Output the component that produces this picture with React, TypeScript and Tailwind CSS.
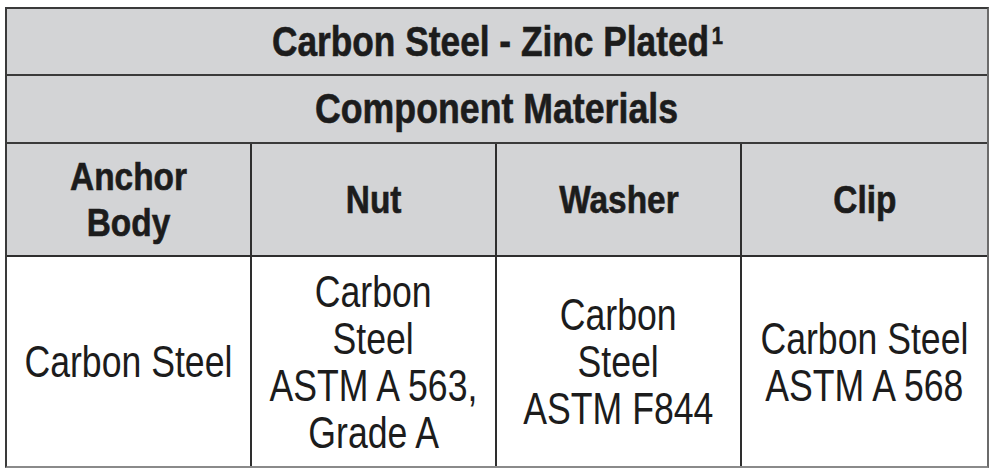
import React from 'react';

const headers = [['Anchor', 'Body'], ['Nut'], ['Washer'], ['Clip']];

const cells = [
  ['Carbon Steel'],
  ['Carbon', 'Steel', 'ASTM A 563,', 'Grade A'],
  ['Carbon', 'Steel', 'ASTM F844'],
  ['Carbon Steel', 'ASTM A 568'],
];

export default function App() {
  const font = { fontFamily: "'Liberation Sans', Arial, sans-serif" };

  return (
    <div className="min-h-[472px] w-[1000px] bg-white pt-[7px] pl-[5px]" style={font}>
      <div className="w-[984px] border-2 border-[#3a3a3a] border-r-[#6b6b6b] border-b-[#8a8a8a] text-[#1c1c1c]">
        {/* Title rows */}
        <div className="flex h-[67px] items-center justify-center border-b-2 border-[#3a3a3a] bg-[#d3d4d6]">
          <span className="inline-block scale-x-[0.84] whitespace-nowrap text-[42px] font-bold leading-none [-webkit-text-stroke:0.6px_#1c1c1c]">
            Carbon Steel - Zinc Plated
            <span className="relative -top-[12px] ml-[3px] text-[24px]">1</span>
          </span>
        </div>
        <div className="flex h-[68px] items-center justify-center border-b-2 border-[#3a3a3a] bg-[#d3d4d6]">
          <span className="inline-block scale-x-[0.85] whitespace-nowrap text-[42px] font-bold leading-none [-webkit-text-stroke:0.6px_#1c1c1c]">
            Component Materials
          </span>
        </div>

        {/* Column headers */}
        <div className="grid h-[113px] grid-cols-4 border-b-2 border-[#2e2e2e] bg-[#d3d4d6]">
          {headers.map((lines, i) => (
            <div
              key={i}
              className={`flex flex-col items-center justify-center text-[38px] font-bold leading-[46px] ${
                i < 3 ? 'border-r-2 border-[#2e2e2e]' : ''
              }`}
            >
              {lines.map((l) => (
                <span key={l} className="inline-block scale-x-[0.88] whitespace-nowrap [-webkit-text-stroke:0.6px_#1c1c1c]">
                  {l}
                </span>
              ))}
            </div>
          ))}
        </div>

        {/* Body row */}
        <div className="grid h-[209px] grid-cols-4 bg-white">
          {cells.map((lines, i) => (
            <div
              key={i}
              className={`flex flex-col items-center justify-center text-[44px] leading-[47px] ${
                i < 3 ? 'border-r-2 border-[#2e2e2e]' : ''
              }`}
            >
              {lines.map((l) => (
                <span key={l} className="inline-block scale-x-[0.81] whitespace-nowrap">
                  {l}
                </span>
              ))}
            </div>
          ))}
        </div>
      </div>
    </div>
  );
}
